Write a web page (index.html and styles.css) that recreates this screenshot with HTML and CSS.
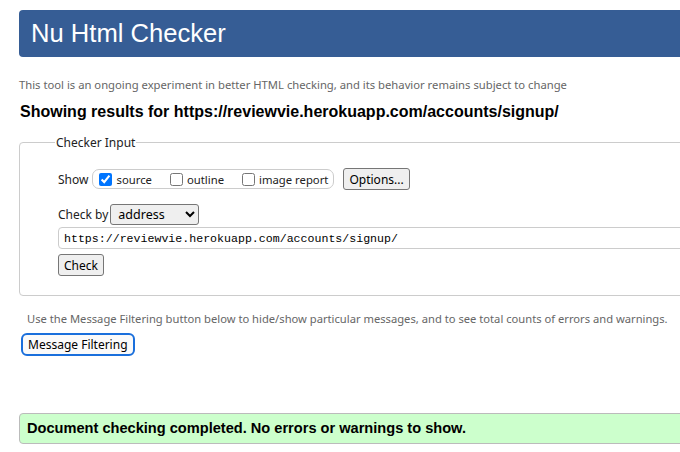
FILE: index.html
```html
<!DOCTYPE html>
<html lang="en">
<head>
<meta charset="utf-8">
<title>Nu Html Checker</title>
<link rel="stylesheet" href="styles.css">
</head>
<body>
<div class="page">
  <h1 class="banner">Nu Html Checker</h1>
  <p class="intro">This tool is an ongoing experiment in better HTML checking, and its behavior remains subject to change</p>
  <h2 class="results">Showing results for https://reviewvie.herokuapp.com/accounts/signup/</h2>
  <fieldset class="checker">
    <legend class="legend">Checker Input</legend>
    <div class="row show-row">
      <span class="label">Show</span>
      <span class="toggles">
        <label class="toggle"><input type="checkbox" checked> source</label>
        <label class="toggle"><input type="checkbox"> outline</label>
        <label class="toggle"><input type="checkbox"> image report</label>
      </span>
      <button class="btn options">Options...</button>
    </div>
    <div class="row by-row">
      <span class="label">Check by</span>
      <select class="select"><option>address</option></select>
    </div>
    <input class="url" type="text" value="https://reviewvie.herokuapp.com/accounts/signup/">
    <button class="btn check">Check</button>
  </fieldset>
  <p class="hint">Use the Message Filtering button below to hide/show particular messages, and to see total counts of errors and warnings.</p>
  <button class="filter">Message Filtering</button>
  <p class="success">Document checking completed. No errors or warnings to show.</p>
</div>
</body>
</html>
```
FILE: styles.css
```css
html, body {
  margin: 0;
  padding: 0;
  overflow: hidden;
  background: #fff;
}
.page {
  width: 720px;
  padding: 10px 0 0 19px;
  font-family: "Noto Sans", "Open Sans", sans-serif;
}
.banner {
  margin: 0;
  height: 47px;
  line-height: 47px;
  padding-left: 12px;
  background: #365d95;
  color: #fff;
  border-radius: 4px;
  font-family: "Liberation Sans", Arial, sans-serif;
  font-weight: normal;
  font-size: 25.6px;
}
.intro {
  margin: 20px 0 0 0;
  font-size: 11.25px;
  color: #666;
  line-height: 16px;
}
.results {
  margin: 9px 0 0 1px;
  font-family: "Liberation Sans", Arial, sans-serif;
  font-size: 16px;
  font-weight: bold;
  color: #000;
  line-height: 20px;
}
.checker {
  margin: 12px 0 0 0;
  padding: 16px 0 19px 38px;
  border: 1px solid #ccc;
  border-radius: 4px;
  font-size: 12px;
  color: #222;
}
.legend {
  margin-left: -3px;
  padding: 0 1px;
  font-size: 12px;
  color: #222;
}
.row {
  display: flex;
  align-items: center;
}
.show-row {
  height: 24px;
}
.label {
  margin-right: 4px;
}
.toggles {
  display: inline-flex;
  align-items: center;
  height: 18px;
  border: 1px solid #ccc;
  border-radius: 7px;
  padding: 0 5px 0 6px;
}
.toggle {
  display: inline-flex;
  align-items: center;
  font-size: 11.3px;
  margin-right: 18px;
}
.toggle:last-child {
  margin-right: 0;
}
.toggle input {
  width: 13px;
  height: 13px;
  margin: 0 4px 0 0;
}
.btn {
  font-family: "Noto Sans", "Open Sans", sans-serif;
  font-size: 12px;
  color: #000;
  background: #efefef;
  border: 1px solid #767676;
  border-radius: 3px;
  padding: 0 5px;
  height: 22px;
}
.options {
  margin-left: 9px;
}
.by-row {
  margin-top: 13px;
}
.by-row .label {
  margin-right: 2px;
}
.select {
  font-family: "Noto Sans", "Open Sans", sans-serif;
  font-size: 12.5px;
  width: 89px;
  height: 21px;
  padding: 0 3px;
  border: 1px solid #767676;
  border-radius: 3px;
  background: #efefef;
  color: #000;
}
.url {
  display: block;
  box-sizing: border-box;
  width: 100%;
  height: 22px;
  margin-top: 2px;
  padding: 0 5px;
  border: 1px solid #ccc;
  border-radius: 4px;
  font-family: "Liberation Mono", monospace;
  font-size: 11.6px;
  color: #000;
}
.check {
  display: block;
  margin-top: 5px;
}
.hint {
  margin: 15px 0 0 8px;
  font-size: 11.2px;
  color: #666;
  line-height: 16px;
}
.filter {
  margin: 6px 0 0 2px;
  height: 23px;
  padding: 0 5px;
  font-family: "Noto Sans", "Open Sans", sans-serif;
  font-size: 12px;
  color: #000;
  background: #fafafa;
  border: 2px solid #1a6fdc;
  border-radius: 6px;
}
.success {
  margin: 57px 0 0 0;
  height: 29px;
  line-height: 29px;
  padding-left: 7px;
  background: #ccffcc;
  border: 1px solid #bbb;
  border-radius: 4px;
  font-family: "Liberation Sans", Arial, sans-serif;
  font-size: 14.6px;
  font-weight: bold;
  color: #000;
}
```
